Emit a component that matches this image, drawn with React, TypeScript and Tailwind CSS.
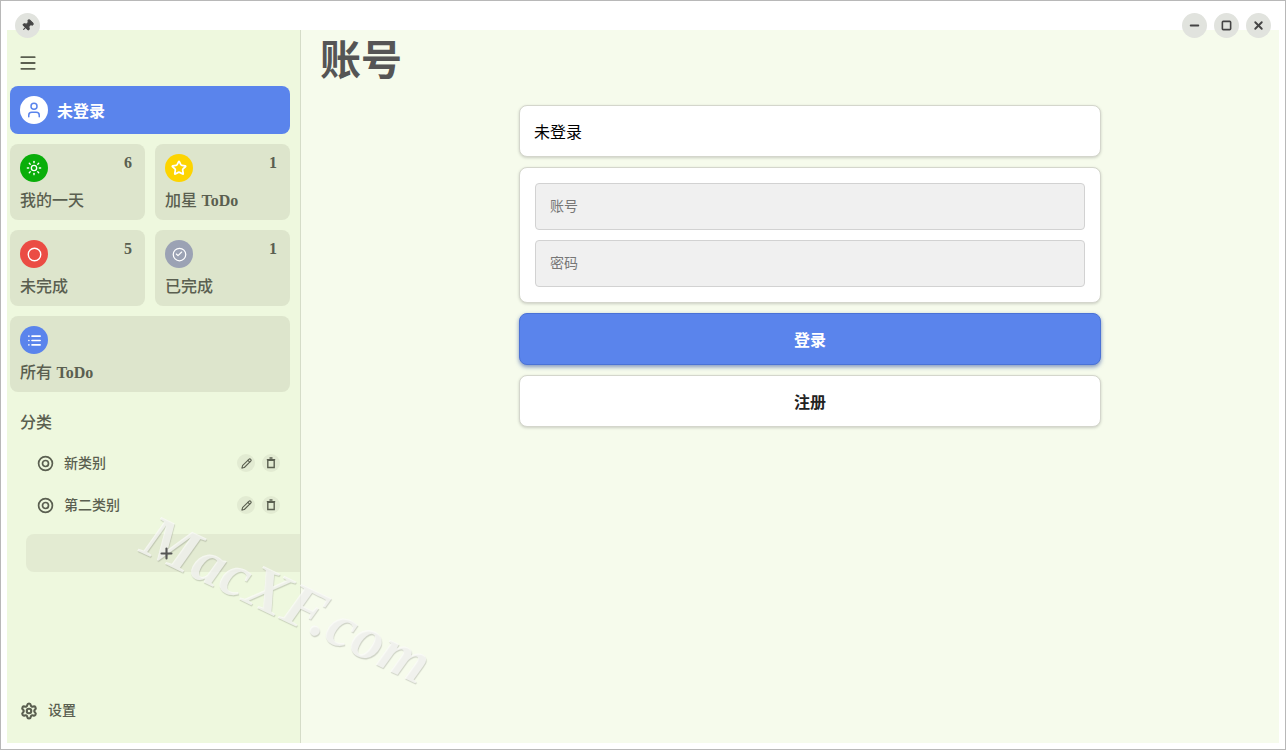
import { Check, Circle, List, Menu, Minus, Pencil, Pin, Plus, Settings, Square, Star, Sun, User, X } from "lucide-react";

const sans = "font-['Liberation_Sans','Noto_Sans_CJK_SC',sans-serif]";
const serif = "font-['Liberation_Serif','Noto_Serif_CJK_SC','Noto_Sans_CJK_SC',serif]";

function RoundButton({ children }: { children: React.ReactNode }) {
  return (
    <button className="w-[25px] h-[25px] rounded-full bg-[#e1e3de] flex items-center justify-center text-[#444]">
      {children}
    </button>
  );
}

function StatCard({ icon, bg, label, count, wide }: { icon: React.ReactNode; bg: string; label: React.ReactNode; count?: number; wide?: boolean }) {
  return (
    <div className={`h-[76px] rounded-lg bg-[#dde5cc] p-[10px] flex flex-col justify-between text-[#5a5f50] ${wide ? "col-span-2" : ""}`}>
      <div className="flex justify-between items-start">
        <span className={`w-[28px] h-[28px] rounded-full flex items-center justify-center text-white ${bg}`}>{icon}</span>
        {count !== undefined && <span className={`${serif} text-[16px] font-bold leading-[18px] mr-[3px]`}>{count}</span>}
      </div>
      <div className="text-[16px] font-medium leading-[20px] mb-[-1px]">{label}</div>
    </div>
  );
}

// two rings, lucide's circle-dot has only a dot in the middle
function RingIcon() {
  return (
    <svg width="17" height="17" viewBox="0 0 17 17" fill="none" stroke="currentColor" strokeWidth="1.7">
      <circle cx="8.5" cy="8.5" r="6.9" />
      <circle cx="8.5" cy="8.5" r="3" />
    </svg>
  );
}

function BinIcon() {
  return (
    <svg width="12" height="12" viewBox="0 0 12 12" fill="none" stroke="currentColor" strokeWidth="1.4">
      <path d="M2.8 3.2h6.4v7.3H2.8z" />
      <path d="M1.8 2.6h8.4M4.5 1h3" />
    </svg>
  );
}

function CategoryRow({ name }: { name: string }) {
  return (
    <div className="h-[42px] pl-[30px] pr-[10px] flex items-center text-[#5a5f50]">
      <RingIcon />
      <span className="ml-[10px] text-[14px] flex-1 font-medium">{name}</span>
      <span className="w-[18px] h-[18px] rounded-full bg-[#e2ebd2] flex items-center justify-center">
        <Pencil size={11} strokeWidth={2.4} />
      </span>
      <span className="ml-[7px] w-[18px] h-[18px] rounded-full bg-[#e2ebd2] flex items-center justify-center">
        <BinIcon />
      </span>
    </div>
  );
}

export default function App() {
  const whiteCard = "rounded-lg bg-white border border-[#d4d6cc] shadow-[0_1px_3px_rgba(0,0,0,0.18)]";
  return (
    <div className={`${sans} relative w-[1286px] h-[750px] overflow-hidden bg-white border border-[#b8b8b8] flex flex-col`}>
      {/* title bar */}
      <div className="h-[29px] shrink-0 relative">
        <div className="absolute left-[14px] top-[12px]">
          <RoundButton><Pin size={13} fill="currentColor" className="rotate-45" /></RoundButton>
        </div>
        <div className="absolute right-[14px] top-[12px] flex gap-[7px]">
          <RoundButton><Minus size={13} strokeWidth={3.5} /></RoundButton>
          <RoundButton><Square size={11} strokeWidth={3.5} /></RoundButton>
          <RoundButton><X size={13} strokeWidth={3.5} /></RoundButton>
        </div>
      </div>

      <div className="flex flex-1 pl-[6px] pr-[6px] pb-[6px] min-h-0">
        {/* sidebar */}
        <aside className="w-[294px] shrink-0 bg-[#eef8de] border-r border-[#d5dcc8] flex flex-col">
          <div className="h-[56px] pl-[11px] pt-[10px] flex items-center shrink-0 text-[#5a5f50]">
            <Menu size={20} strokeWidth={2.2} />
          </div>
          <div className="pl-[3px] pr-[10px]">
            <div className="h-[48px] rounded-lg bg-[#5a84ec] flex items-center px-[10px] text-white">
              <span className="w-[28px] h-[28px] rounded-full bg-white flex items-center justify-center text-[#5a84ec]">
                <User size={18} strokeWidth={2} />
              </span>
              <span className="ml-[9px] pt-[3px] text-[16px] font-semibold">未登录</span>
            </div>
            <div className="grid grid-cols-2 gap-[10px] mt-[10px]">
              <StatCard icon={<Sun size={16} />} bg="bg-[#0aae0a]" label="我的一天" count={6} />
              <StatCard icon={<Star size={16} strokeWidth={2.6} />} bg="bg-[#fdd400]" label={<>加星 <span className={`${serif} font-bold`}>ToDo</span></>} count={1} />
              <StatCard icon={<Circle size={15} strokeWidth={2.2} />} bg="bg-[#eb4c44]" label="未完成" count={5} />
              <StatCard
                icon={
                  <span className="relative flex items-center justify-center">
                    <Circle size={15} strokeWidth={2} />
                    <Check size={8} strokeWidth={3.5} className="absolute" />
                  </span>
                }
                bg="bg-[#9ba2b4]"
                label="已完成"
                count={1}
              />
              <StatCard icon={<List size={15} strokeWidth={2.6} />} bg="bg-[#5a84ec]" label={<>所有 <span className={`${serif} font-bold`}>ToDo</span></>} wide />
            </div>
          </div>

          <div className="mt-[20px] pl-[13px] text-[16px] font-medium leading-[22px] text-[#5a5f50]">分类</div>
          <div className="mt-[8px] pr-[10px]">
            <CategoryRow name="新类别" />
            <CategoryRow name="第二类别" />
          </div>
          <div className="mt-[8px] ml-[19px] h-[38px] rounded-l-lg bg-[#e3ebd2] flex items-center justify-center pl-[6px] text-[#555]">
            <Plus size={17} strokeWidth={3} className="relative z-10" />
          </div>

          <div className="mt-auto mb-[22px] pl-[13px] flex items-center text-[#5a5f50]">
            <Settings size={18} strokeWidth={2.8} />
            <span className="ml-[10px] text-[14px] font-medium">设置</span>
          </div>
        </aside>

        {/* main */}
        <main className="flex-1 bg-[#f6fbec]">
          <h1 className="pl-[19px] mt-[7px] text-[41px] leading-[48px] font-bold text-[#555]">账号</h1>
          <div className="pl-[40px] flex justify-center mt-[20px]">
            <div className="w-[582px] flex flex-col gap-[10px]">
              <div className={`${whiteCard} h-[52px] flex items-center px-[14px] pt-[3px] text-[16px] text-black`}>未登录</div>
              <div className={`${whiteCard} h-[136px] p-[15px] flex flex-col gap-[10px]`}>
                <div className="h-[47px] rounded bg-[#f0f0f0] border border-[#d2d2d2] flex items-center px-[14px] text-[14px] text-[#777]">账号</div>
                <div className="h-[47px] rounded bg-[#f0f0f0] border border-[#d2d2d2] flex items-center px-[14px] text-[14px] text-[#777]">密码</div>
              </div>
              <button className="h-[52px] pt-[3px] rounded-lg bg-[#5a84ec] border border-[#4a72d6] shadow-[0_2px_4px_rgba(50,80,160,0.6)] text-white text-[16px] font-bold">登录</button>
              <button className={`${whiteCard} h-[52px] pt-[3px] text-[16px] font-bold text-[#222]`}>注册</button>
            </div>
          </div>
        </main>
      </div>

      {/* watermark over the page */}
      <div className={`${serif} absolute left-[146px] top-[500px] origin-left rotate-[25.5deg] text-[62px] font-bold italic leading-none text-[#fbfbf9]/75 [text-shadow:1px_1px_1px_rgba(0,0,0,0.16)] whitespace-nowrap pointer-events-none`}>
        MacXF.com
      </div>
    </div>
  );
}
